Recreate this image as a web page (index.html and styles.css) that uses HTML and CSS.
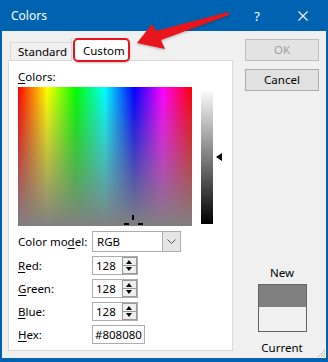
FILE: index.html
```html
<!DOCTYPE html>
<html lang="en">
<head>
  <meta charset="UTF-8">
  <title>Colors</title>
  <link rel="stylesheet" href="styles.css">
</head>
<body>
  <div class="window">
    <!-- Title bar -->
    <div class="titlebar">
      <span class="title">Colors</span>
      <span class="tb-btn help">?</span>
      <span class="tb-btn close">
        <svg width="10" height="10" viewBox="0 0 10 10"><path d="M0.5 0.5 L9.5 9.5 M9.5 0.5 L0.5 9.5" stroke="#fff" stroke-width="1.1" fill="none"/></svg>
      </span>
    </div>

    <div class="content">
      <div class="left">
        <div class="tabs">
          <div class="tab std">Standard</div>
          <div class="tab active">Custom</div>
        </div>

        <div class="panel">
          <div class="label"><u>C</u>olors:</div>
          <div class="picker">
            <div class="spectrum">
              <span class="cross cross-top"></span>
              <span class="cross cross-left"></span>
              <span class="cross cross-right"></span>
            </div>
            <div class="lum"></div>
            <div class="lum-arrow"></div>
          </div>

          <div class="form">
            <div class="label">Color mo<u>d</u>el:</div>
            <div class="select">
              <span class="select-text">RGB</span>
              <span class="select-btn">
                <svg width="9" height="5" viewBox="0 0 9 5"><path d="M0.5 0.5 L4.5 4.5 L8.5 0.5" stroke="#555" stroke-width="1" fill="none"/></svg>
              </span>
            </div>

            <div class="label"><u>R</u>ed:</div>
            <div class="spin"><span class="spin-val">128</span><span class="spin-btns"><span class="sb up"></span><span class="sb down"></span></span></div>

            <div class="label"><u>G</u>reen:</div>
            <div class="spin"><span class="spin-val">128</span><span class="spin-btns"><span class="sb up"></span><span class="sb down"></span></span></div>

            <div class="label"><u>B</u>lue:</div>
            <div class="spin"><span class="spin-val">128</span><span class="spin-btns"><span class="sb up"></span><span class="sb down"></span></span></div>

            <div class="label"><u>H</u>ex:</div>
            <div class="hex">#808080</div>
          </div>
        </div>
      </div>

      <div class="right">
        <div class="btn disabled">OK</div>
        <div class="btn">Cancel</div>

        <div class="preview">
          <div class="preview-label">New</div>
          <div class="swatch">
            <div class="swatch-new"></div>
            <div class="swatch-cur"></div>
          </div>
          <div class="preview-label current">Current</div>
        </div>
      </div>
    </div>

    <!-- resize grip -->
    <svg class="grip" width="9" height="9" viewBox="0 0 9 9">
      <path d="M8 1 L1 8 M8 4 L4 8 M8 7 L7 8" stroke="#b9b9b9" stroke-width="1" fill="none"/>
    </svg>

    <!-- annotation arrow -->
    <svg class="annot-arrow" width="328" height="60" viewBox="0 0 328 60">
      <defs>
        <filter id="sh" x="-10%" y="-30%" width="120%" height="160%">
          <feDropShadow dx="0" dy="1" stdDeviation="1" flood-color="#000" flood-opacity="0.3"/>
        </filter>
      </defs>
      <polygon points="137,43 152,24 156,31 228,12 229,15 161,40 165,49" fill="#e8141c" filter="url(#sh)"/>
    </svg>
  </div>
</body>
</html>
```

FILE: styles.css
```css
* {
  margin: 0;
  padding: 0;
  box-sizing: border-box;
}

body {
  width: 328px;
  height: 362px;
  overflow: hidden;
  font-family: "Noto Sans", "Segoe UI", sans-serif;
  font-size: 11.5px;
  color: #000;
  background: #0063b1;
}

u {
  text-decoration-thickness: 1px;
  text-underline-offset: 2px;
}

.window {
  position: relative;
  width: 328px;
  height: 362px;
  background: #f0f0f0;
  border: 2px solid #0063b1;
  border-top: 0;
  border-bottom-width: 4px;
  display: flex;
  flex-direction: column;
}

/* Title bar */
.titlebar {
  height: 31px;
  background: #0063b1;
  color: #fff;
  display: flex;
  align-items: center;
}

.title {
  flex: 1;
  padding-left: 9px;
  font-size: 12px;
}

.tb-btn {
  width: 46px;
  height: 31px;
  display: flex;
  align-items: center;
  justify-content: center;
  font-size: 13px;
}

/* Main area */
.content {
  flex: 1;
  display: flex;
  gap: 12px;
  padding: 7px 7px 7px 6px;
}

.left {
  width: 225px;
  display: flex;
  flex-direction: column;
}

/* Tabs */
.tabs {
  display: flex;
  align-items: flex-end;
  padding-left: 2px;
  margin-bottom: -1px;
  position: relative;
  z-index: 1;
}

.tab {
  height: 19px;
  border: 1px solid #d9d9d9;
  border-bottom: 0;
  line-height: 18px;
  white-space: nowrap;
}

.tab.std {
  width: 61px;
  padding-left: 7px;
  border-right: 0;
}

.tab.active {
  position: relative;
  width: 58px;
  height: 23px;
  padding: 3px 0 0 11px;
  background: #fff;
}

/* red annotation box round the Custom tab */
.tab.active::after {
  content: "";
  position: absolute;
  top: -1px;
  left: 1px;
  right: -2px;
  bottom: -1px;
  border: 2px solid #e8141c;
  border-radius: 5px;
  box-shadow: 0 1px 2px rgba(0, 0, 0, 0.25);
}

.panel {
  flex: 1;
  background: #fff;
  border: 1px solid #d9d9d9;
  padding: 8px 0 0 9px;
}

.label {
  line-height: 15px;
}

/* Colour picker */
.picker {
  display: flex;
  margin-top: 3px;
  height: 139px;
}

.spectrum {
  position: relative;
  width: 174px;
  height: 139px;
  background:
    linear-gradient(to bottom, rgba(128, 128, 128, 0), #808080),
    linear-gradient(to right, #f00, #ff0 16.7%, #0f0 33.3%, #0ff 50%, #00f 66.7%, #f0f 83.3%, #f00);
}

.cross {
  position: absolute;
  background: #000;
}

.cross-top { left: 114px; top: 128px; width: 2px; height: 5px; }
.cross-left { left: 106px; top: 136px; width: 5px; height: 2px; }
.cross-right { left: 120px; top: 136px; width: 5px; height: 2px; }

.lum {
  width: 12px;
  height: 133px;
  margin: 4px 0 0 9px;
  background: linear-gradient(to bottom, #fafafa, #000);
}

.lum-arrow {
  align-self: center;
  margin-left: 3px;
  width: 0;
  height: 0;
  border-top: 4px solid transparent;
  border-bottom: 4px solid transparent;
  border-right: 6px solid #000;
}

/* Form rows */
.form {
  margin-top: 5px;
  display: grid;
  grid-template-columns: 74px auto;
  row-gap: 4px;
  align-items: center;
  justify-items: start;
}

.select {
  width: 89px;
  height: 21px;
  border: 1px solid #adadad;
  display: flex;
}

.select-text {
  flex: 1;
  padding-left: 4px;
  line-height: 19px;
}

.select-btn {
  width: 18px;
  background: #e5e5e5;
  border-left: 1px solid #adadad;
  display: flex;
  align-items: center;
  justify-content: center;
}

.spin {
  width: 46px;
  height: 19px;
  border: 1px solid #adadad;
  display: flex;
}

.spin-val {
  flex: 1;
  padding-left: 3px;
  line-height: 18px;
}

.spin-btns {
  width: 15px;
  display: flex;
  flex-direction: column;
}

.sb {
  flex: 1;
  position: relative;
  background: #f0f0f0;
  border: 1px solid #9a9a9a;
}

.sb.down {
  border-top: 0;
}

.sb::after {
  content: "";
  position: absolute;
  left: 3px;
  top: 2px;
  border-left: 3.5px solid transparent;
  border-right: 3.5px solid transparent;
}

.sb.up::after {
  border-bottom: 4px solid #000;
}

.sb.down::after {
  top: 1px;
  border-top: 4px solid #000;
}

.hex {
  width: 53px;
  height: 19px;
  border: 1px solid #adadad;
  padding-left: 2px;
  line-height: 18px;
}

/* Right column */
.right {
  width: 74px;
  display: flex;
  flex-direction: column;
  gap: 8px;
  margin: 1px 0 -4px;
}

.btn {
  height: 22px;
  border: 1px solid #adadad;
  background: #e1e1e1;
  text-align: center;
  line-height: 20px;
}

.btn.disabled {
  color: #a0a0a0;
  border-color: #bfbfbf;
  background: #e3e3e3;
}

.preview {
  margin-top: auto;
  display: flex;
  flex-direction: column;
  align-items: center;
}

.preview-label {
  line-height: 15px;
}

.preview-label.current {
  margin-top: 8px;
}

.swatch {
  width: 49px;
  height: 48px;
  margin-top: 4px;
  border: 1px solid #646464;
  display: flex;
  flex-direction: column;
}

.swatch-new {
  height: 22px;
  background: #808080;
}

.swatch-cur {
  flex: 1;
  background: #f0f0f0;
}

.grip {
  position: absolute;
  right: 0;
  bottom: 0;
}

.annot-arrow {
  position: absolute;
  left: -2px;
  top: 0;
  pointer-events: none;
}
```
